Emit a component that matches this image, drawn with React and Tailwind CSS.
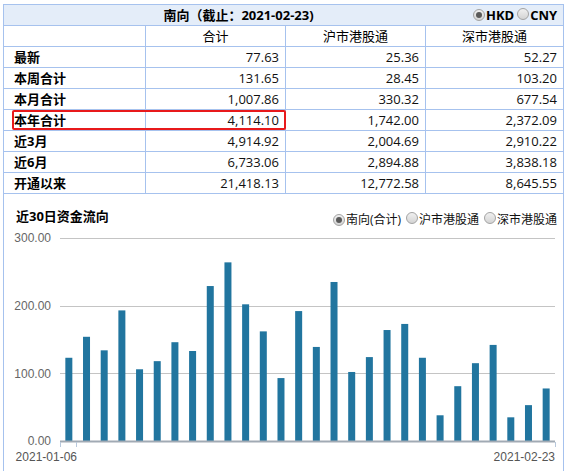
import React from 'react';

const FONT = { fontFamily: '"Open Sans", "Noto Sans CJK SC", sans-serif' };

const ROWS = [
  ['最新', '77.63', '25.36', '52.27'],
  ['本周合计', '131.65', '28.45', '103.20'],
  ['本月合计', '1,007.86', '330.32', '677.54'],
  ['本年合计', '4,114.10', '1,742.00', '2,372.09'],
  ['近3月', '4,914.92', '2,004.69', '2,910.22'],
  ['近6月', '6,733.06', '2,894.88', '3,838.18'],
  ['开通以来', '21,418.13', '12,772.58', '8,645.55'],
];

const FLOWS = [123, 154, 134, 193, 106, 118, 146, 133, 229, 264, 202, 162, 93, 192,
  139, 235, 102, 124, 164, 173, 123, 38, 81, 115, 142, 35, 53, 77.63];

const Radio = ({ checked }) => (
  <span className="inline-flex w-[12px] h-[12px] rounded-full border border-[#a3a3a3] bg-gradient-to-b from-[#f0f0f0] to-[#d4d4d4] items-center justify-center shrink-0">
    {checked && <span className="w-[6px] h-[6px] rounded-full bg-[#5a5a5a]" />}
  </span>
);

const FlowChart = () => {
  const left = 56;
  const right = 551;
  const base = 211;
  const k = 203 / 300;
  const band = (right - left) / FLOWS.length;
  const grid = [300, 200, 100];

  return (
    <svg width="559" height="241" className="block overflow-visible" style={{ fontFamily: '"Liberation Sans", sans-serif' }}>
      {grid.map((g) => (
        <line key={g} x1={left} x2={right} y1={Math.round(base - g * k) + 0.5} y2={Math.round(base - g * k) + 0.5} stroke="#c4c4c4" />
      ))}
      {[300, 200, 100, 0].map((g) => (
        <text key={g} x="47" y={base - g * k + 1} textAnchor="end" dominantBaseline="middle" fontSize="12" fill="#666">
          {g.toFixed(2)}
        </text>
      ))}
      {FLOWS.map((v, i) => {
        const h = v * k;
        const cx = left + (i + 0.5) * band;
        return <rect key={i} x={cx - 3.5} y={base - h} width="7" height={h} fill="#21759f" />;
      })}
      <line x1={left} x2={right} y1={base + 0.5} y2={base + 0.5} stroke="#a1aab4" strokeWidth="2" />
      {[left, 72, right].map((x) => (
        <line key={x} x1={x + 0.5} x2={x + 0.5} y1={base + 1} y2={base + 6} stroke="#b8c8dc" />
      ))}
      <text x="73" y="228" textAnchor="end" dominantBaseline="middle" fontSize="12" fill="#555">2021-01-06</text>
      <text x="551" y="228" textAnchor="end" dominantBaseline="middle" fontSize="12" fill="#555">2021-02-23</text>
    </svg>
  );
};

export default function App() {
  return (
    <div className="w-[566px] h-[471px] overflow-hidden bg-white text-black pl-[3px] pt-[4px]" style={FONT}>
      <div className="w-[561px] border-l border-t border-[#a6c2ee]">
        {/* header */}
        <div className="flex h-[21px] items-center bg-[#e4edf9] border-r border-b border-[#a6c2ee] text-[13px] font-bold leading-none">
          <div className="w-[469px] text-center">南向（截止：2021-02-23)</div>
          <div className="flex items-center">
            <Radio checked />
            <span className="ml-[1px]">HKD</span>
            <span className="ml-[3px]"><Radio /></span>
            <span className="ml-[1px]">CNY</span>
          </div>
        </div>
        <div className="grid grid-cols-[142px_140px_140px_138px] text-[13px] leading-none">
          {['', '合计', '沪市港股通', '深市港股通'].map((h, i) => (
            <div key={i} className="h-[21px] flex items-center justify-center border-r border-b border-[#a6c2ee]">{h}</div>
          ))}
          {ROWS.map((r, ri) => (
            <React.Fragment key={ri}>
              <div className="relative h-[21px] flex items-center pl-[10px] font-bold border-r border-b border-[#a6c2ee]">
                {r[0]}
                {r[0] === '本年合计' && (
                  <div className="absolute left-[8px] top-[0px] w-[274px] h-[20px] border-2 border-[#e8191b] rounded-[2px] z-10 pointer-events-none" />
                )}
              </div>
              {r.slice(1).map((v, ci) => (
                <div key={ci} className="h-[21px] flex items-center justify-end pr-[6px] text-[#111] border-r border-b border-[#a6c2ee]">{v}</div>
              ))}
            </React.Fragment>
          ))}
        </div>
        {/* chart panel */}
        <div className="h-[277px] border-r border-[#a6c2ee]">
          <div className="flex justify-between h-[36px] pt-[15px] pl-[12px] pr-[6px] leading-[14px]">
            <div className="text-[13px] font-bold">近30日资金流向</div>
            <div className="flex items-center text-[12px] text-[#111]">
              <Radio checked />
              <span className="ml-[1px]">南向(合计)</span>
              <span className="ml-[5px]"><Radio /></span>
              <span className="ml-[1px]">沪市港股通</span>
              <span className="ml-[5px]"><Radio /></span>
              <span className="ml-[1px]">深市港股通</span>
            </div>
          </div>
          <FlowChart />
        </div>
      </div>
    </div>
  );
}
